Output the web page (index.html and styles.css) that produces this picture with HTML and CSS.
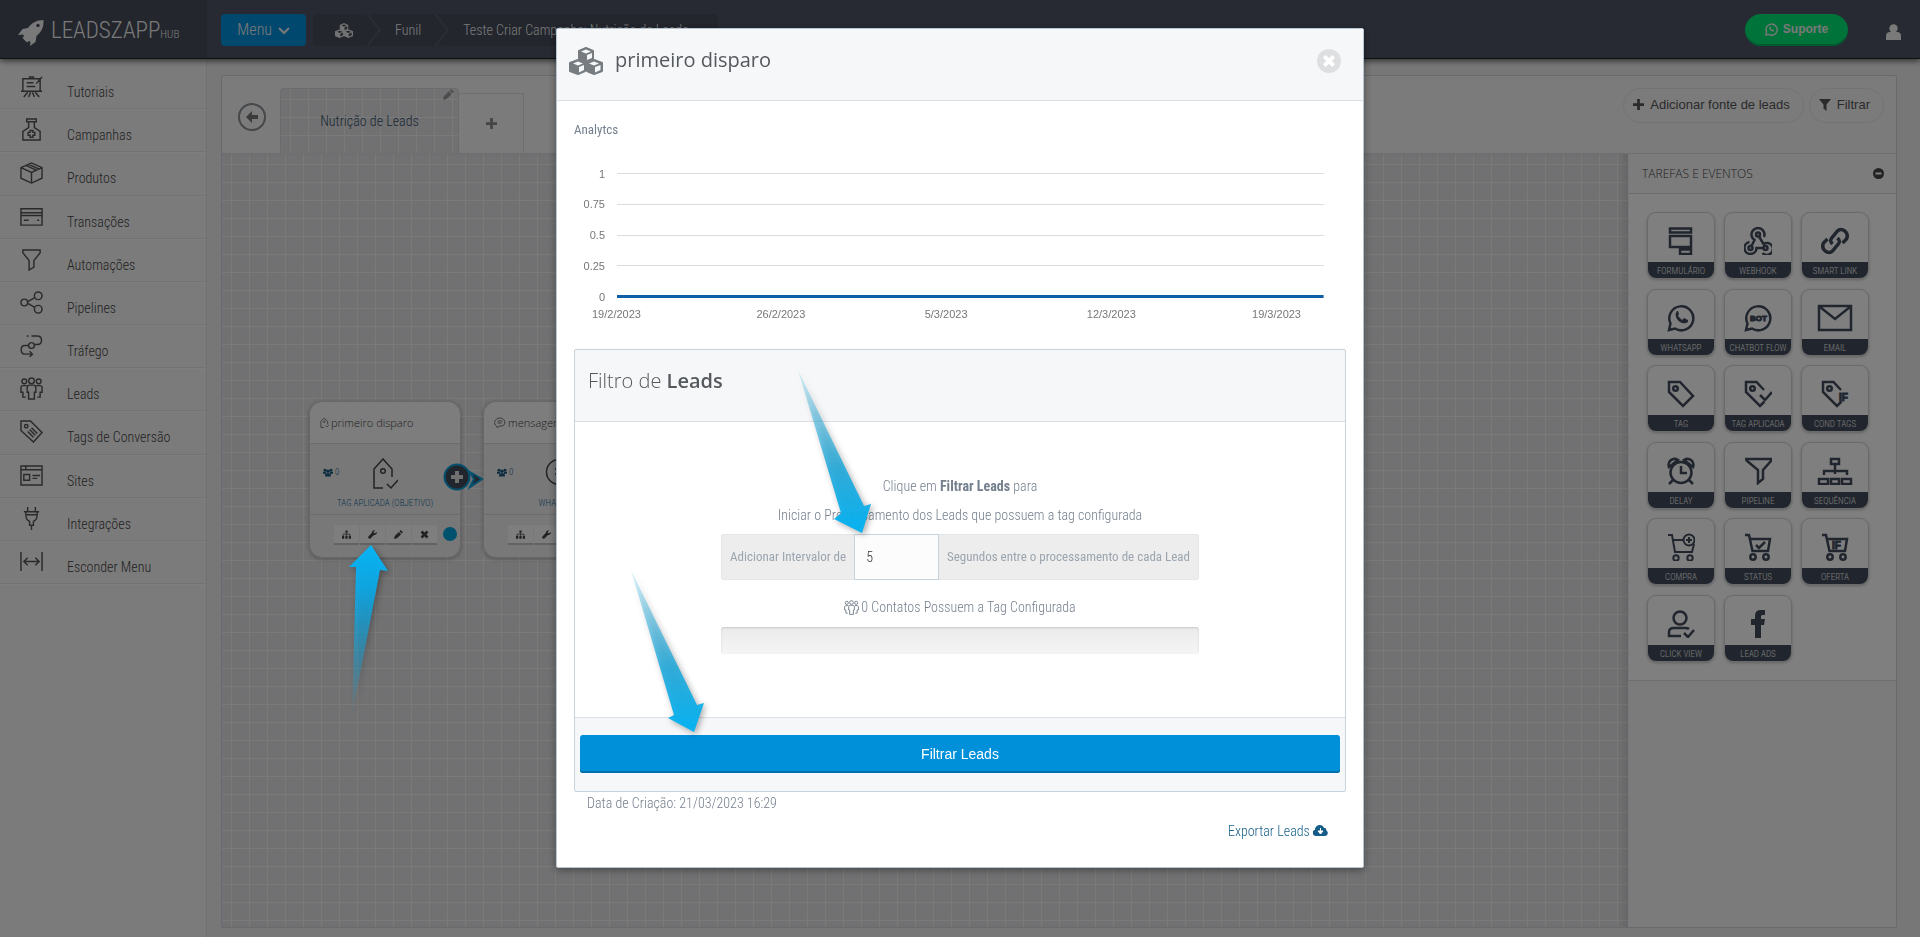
FILE: index.html
```html
<!DOCTYPE html>
<html lang="pt-BR">
<head>
<meta charset="utf-8">
<title>LeadsZapp Hub - Funil</title>
<link rel="stylesheet" href="styles.css">
</head>
<body>
<svg class="sprite" aria-hidden="true">
  <symbol id="cubes" viewBox="0 0 34 28"><g fill="currentColor" stroke="currentColor" stroke-width="2" stroke-linejoin="round"><path d="M17 1l7 3v8l-7 3-7-3V4z"/><path d="M9 13l7 3v8l-7 3-8-3v-8z"/><path d="M25 13l8 3v8l-8 3-7-3v-8z"/></g><g class="cube-face"><path d="M17 2.500l5 2-5 2-5-2z"/><path d="M18 8l5-2v5l-5 2z"/><path d="M9 14.500l5 2-5 2-5-2z"/><path d="M10 20l5-2v5l-5 2.500z"/><path d="M25 14.500l5 2-5 2-5-2z"/><path d="M26 20l5.500-2v5l-5.500 2.500z"/></g></symbol>
  <symbol id="plus" viewBox="0 0 12 12"><path d="M6 0v12M0 6h12" stroke="currentColor" stroke-width="3" fill="none"/></symbol>
  <symbol id="pencil" viewBox="0 0 12 12"><path d="M0 12l1-4 5.500-5.500 3 3L4 11zM7.300 1.700L9 0l3 3-1.700 1.700z" fill="currentColor"/></symbol>
  <symbol id="sitemap" viewBox="0 0 12 11"><path d="M4.500 0h3v3h-3zM0 7h3v4H0zM4.500 7h3v4h-3zM9 7h3v4H9z" fill="currentColor"/><path d="M6 3v4M1.500 7V5h9v2" stroke="currentColor" fill="none"/></symbol>
  <symbol id="wrench" viewBox="0 0 12 12"><path d="M11.500 2.500L9.600 4.300 7.900 4 7.600 2.400 9.500.5C7.500-.3 5 1 5.200 3.800L.6 8.700C-.8 10.300 1.500 12.900 3.300 11.300L8 6.700C10.800 7 12.500 4.500 11.500 2.500z" fill="currentColor"/></symbol>
  <symbol id="times" viewBox="0 0 12 12"><path d="M2 2l8 8M10 2l-8 8" stroke="currentColor" stroke-width="3.500" fill="none"/></symbol>
  <symbol id="users" viewBox="0 0 15 12"><g fill="currentColor"><circle cx="3" cy="2.500" r="2.200"/><circle cx="12" cy="2.500" r="2.200"/><circle cx="7.500" cy="4.200" r="2.600"/><path d="M0 8V5h4.500v3zM10.500 8V5H15v3zM3 12c0-4 1-5 2.500-5h4C11 7 12 8 12 12z"/></g></symbol>
  <symbol id="funnel" viewBox="0 0 24 24"><path d="M3 2h18v3l-6.500 8v7L9.500 23V13L3 5z" stroke-linejoin="miter"/></symbol>
  <symbol id="people" viewBox="0 0 24 24"><circle cx="12" cy="4" r="3"/><circle cx="4.500" cy="4.500" r="2.500"/><circle cx="19.500" cy="4.500" r="2.500"/><path d="M9 23v-7H7.500v-5C7.500 9 8.500 8.500 10 8.500h4c1.500 0 2.500.5 2.500 2.500v5H15v7zM7 9H3C1.500 9 1 10 1 11v5h2v5h3M17 9h4c1.500 0 2 1 2 2v5h-2v5h-3"/></symbol>
  <symbol id="tag" viewBox="0 0 28 28"><path d="M2 2h11l13 14-10 10L2 12z"/><circle cx="8.500" cy="8.500" r="2.300"/></symbol>
  <symbol id="tagcut" viewBox="0 0 28 28"><path d="M20 10l-7.500-8H2v10l14 14 4.500-4.500"/><circle cx="8.500" cy="8.500" r="2.300"/></symbol>
  <symbol id="cart" viewBox="0 0 28 28"><path d="M1 2h4l3.500 16h15.500L26 6H6"/><circle cx="9" cy="24" r="2.700"/><circle cx="22" cy="24" r="2.700"/></symbol>
  <symbol id="bubble" viewBox="0 0 28 28"><path d="M2 26l1.500-6.500A12 12 0 1 1 8 24.500z"/></symbol>
</svg>

<div class="app">
  <header class="topbar">
    <a class="brand" href="#"><svg width="26" height="26" viewBox="0 0 26 26"><path d="M25.500 0c-7 0-12 3-15.500 8L4.500 9 0 15l5-.5 1 1.500-1.500 2 4.500 4.500 2-1.500 1.500 1-.5 4 5.500-4 1-6C23 12 26 8 25.500 0z" fill="currentColor"/><circle cx="20" cy="5.500" r="1.700" fill="#464c5b"/></svg><span class="brand-name">LEADSZAPP<small>HUB</small></span></a>
    <div class="toolbar">
      <button class="menu-btn" type="button">Menu <svg width="12" height="8" viewBox="0 0 12 8"><path d="M1 1l5 5 5-5" fill="none" stroke="currentColor" stroke-width="2"/></svg></button>
      <nav class="crumbs" aria-label="Trilha"><a class="crumb-home" href="#" aria-label="Início"><svg width="18" height="15"><use href="#cubes"/></svg></a><svg class="crumb-sep" viewBox="0 0 14 32"><path d="M0 0l13 16L0 32"/></svg><a class="crumb" href="#">Funil</a><svg class="crumb-sep" viewBox="0 0 14 32"><path d="M0 0l13 16L0 32"/></svg><a class="crumb" href="#">Teste Criar Campanha: Nutrição de Leads</a></nav>
      <button class="support" type="button"><svg width="13" height="13" viewBox="0 0 28 28" fill="none" stroke="currentColor" stroke-width="3"><use href="#bubble"/><path d="M10 8c-3 5 4 12 9 10l1-2-3-2-2 1-3-3 1-2-1-3z" fill="currentColor" stroke="none"/></svg>Suporte</button>
      <button class="profile" type="button" aria-label="Perfil"><svg width="15" height="16" viewBox="0 0 15 16"><path d="M0 16v-4c0-2 1-4 4-4h7c3 0 4 2 4 4v4z" fill="currentColor"/><circle cx="7.500" cy="4.500" r="4.200" fill="currentColor"/></svg></button>
    </div>
  </header>

  <aside class="sidebar">
    <ul class="side-list">
      <li><a href="#"><svg viewBox="0 0 24 24"><path d="M3 4h18v13H3zM1 17h22M8 18l-4 5M16 18l4 5M11 18l-2 5M13 18l2 5M10 4V2h4v2M7 8h7M7 12h9M23 2l-6 7"/></svg><span>Tutoriais</span></a></li>
      <li><a href="#"><svg viewBox="0 0 24 24"><path d="M7 1h10v3H7zM9 4v6l-6 4v9h18v-9l-6-4V4"/><path d="M10.500 13h3v2h2v3h-2v2h-3v-2h-2v-3h2z"/></svg><span>Campanhas</span></a></li>
      <li><a href="#"><svg viewBox="0 0 24 24"><path d="M1 7l11-5 11 5v11l-11 5L1 18zM1 7l11 5 11-5M12 12v11M6 4.500l11 5M9 3.500l11 5"/></svg><span>Produtos</span></a></li>
      <li><a href="#"><svg viewBox="0 0 24 24"><path d="M1 4h22v17H1zM1 8h22M1 11h22M4 16h5M18 16h2"/></svg><span>Transações</span></a></li>
      <li><a href="#"><svg><use href="#funnel"/></svg><span>Automações</span></a></li>
      <li><a href="#"><svg viewBox="0 0 24 24"><circle cx="4.500" cy="12" r="3.500"/><circle cx="19" cy="5" r="4"/><circle cx="19" cy="19" r="4"/><path d="M8 11l7.500-4M8 13l7.500 4"/></svg><span>Pipelines</span></a></li>
      <li><a href="#"><svg viewBox="0 0 24 24"><circle cx="12" cy="12" r="3"/><path d="M7 2h2M12 2h6c6 0 6 9 0 9h-3M9 12H5c-5 0-5 9 0 9h7M10 18l3 3-3 3"/></svg><span>Tráfego</span></a></li>
      <li><a href="#"><svg><use href="#people"/></svg><span>Leads</span></a></li>
      <li><a href="#"><svg viewBox="0 0 24 24"><path d="M1 1h10l12 12-9 10L1 11z"/><circle cx="6.500" cy="6.500" r="1.800"/><path d="M8 12l6 6M10 10l6 6M12 8l6 6"/></svg><span>Tags de Conversão</span></a></li>
      <li><a href="#"><svg viewBox="0 0 24 24"><path d="M1 2h22v20H1zM1 6h22M6 2v4M4 11h6v6H4zM13 12h8M13 15h5"/></svg><span>Sites</span></a></li>
      <li><a href="#"><svg viewBox="0 0 24 24"><path d="M4 5h16M8 0v5M16 0v5M6 5c0 7 1 9 4 10v4h4v-4c3-1 4-3 4-10M12 19v5M6 8h12"/></svg><span>Integrações</span></a></li>
      <li><a href="#"><svg viewBox="0 0 24 24"><path d="M1 2v20M23 2v20M4 12h16M8 8l-4 4 4 4M16 8l4 4-4 4"/></svg><span>Esconder Menu</span></a></li>
    </ul>
  </aside>

  <main class="content">
    <section class="board">
      <div class="board-head">
        <button class="back" type="button" aria-label="Voltar"><svg width="12" height="12" viewBox="0 0 12 12"><path d="M0 6l6-6v4h6v4H6v4z" fill="currentColor"/></svg></button>
        <button class="tab" type="button">Nutrição de Leads<svg class="tab-edit" width="11" height="11"><use href="#pencil"/></svg></button>
        <button class="tab-add" type="button" aria-label="Nova aba"><svg width="11" height="11"><use href="#plus"/></svg></button>
        <div class="board-actions">
          <button class="pill" type="button"><svg width="11" height="11"><use href="#plus"/></svg>Adicionar fonte de leads</button>
          <button class="pill" type="button"><svg width="12" height="12" viewBox="0 0 12 12"><path d="M0 0h12L7.500 5.500V12L4.500 9.500v-4z" fill="currentColor"/></svg>Filtrar</button>
        </div>
      </div>
      <div class="board-body">
        <div class="canvas">
          <article class="node node-a">
            <h3><svg width="9" height="11" viewBox="0 0 20 24"><path d="M2 23V9l7-7 8 7v7M2 23h7M12 19l3 3 5-5"/><circle cx="9.500" cy="10" r="2"/></svg>primeiro disparo</h3>
            <div class="node-body">
              <span class="count"><svg width="10" height="9"><use href="#users"/></svg>0</span>
              <svg class="node-icon" width="25" height="32" viewBox="0 0 25 32"><path d="M10 30H1V11L10 1l9 10v8M14 26l4 4 7-8"/><circle cx="10" cy="13" r="2.300"/></svg>
              <p>TAG APLICADA (OBJETIVO)</p>
            </div>
            <div class="node-foot"><div class="node-tools"><button type="button" aria-label="Fluxo"><svg><use href="#sitemap"/></svg></button><button type="button" aria-label="Ações"><svg><use href="#wrench"/></svg></button><button type="button" aria-label="Editar"><svg><use href="#pencil"/></svg></button><button type="button" aria-label="Excluir"><svg><use href="#times"/></svg></button></div><i class="dot"></i></div>
          </article>
          <article class="node node-b">
            <h3><svg width="12" height="11" viewBox="0 0 24 22"><path d="M5 18C-2 14 1 2 12 2s13 14 4 16h-4l-6 3zM7 8h10M7 12h8"/></svg>mensagem</h3>
            <div class="node-body">
              <span class="count"><svg width="10" height="9"><use href="#users"/></svg>0</span>
              <svg class="node-icon" width="28" height="32" viewBox="0 0 28 32"><circle cx="14" cy="14" r="12.500"/><path d="M10 11h9M10 16h7"/></svg>
              <p>WHATSAPP</p>
            </div>
            <div class="node-foot"><div class="node-tools"><button type="button" aria-label="Fluxo"><svg><use href="#sitemap"/></svg></button><button type="button" aria-label="Ações"><svg><use href="#wrench"/></svg></button><button type="button" aria-label="Editar"><svg><use href="#pencil"/></svg></button><button type="button" aria-label="Excluir"><svg><use href="#times"/></svg></button></div></div>
          </article>
          <svg class="link" width="42" height="30" viewBox="0 0 42 30"><path d="M27 9l12 7-12 8 4-8z" fill="#434c5c" stroke="#0aa0da" stroke-width="2"/><circle cx="14" cy="14" r="12.500" fill="#434c5c" stroke="#0aa0da" stroke-width="2"/><path d="M14 8v12M8 14h12" stroke="#e0e0e0" stroke-width="4"/></svg>
        </div>
        <aside class="tasks">
          <div class="tasks-head"><h2>TAREFAS E EVENTOS</h2><button type="button" aria-label="Recolher"><svg width="11" height="11" viewBox="0 0 11 11"><circle cx="5.500" cy="5.500" r="5.500" fill="#464646"/><path d="M2.500 5.500h6" stroke="#fff" stroke-width="2"/></svg></button></div>
          <div class="tiles">
            <button class="tile" type="button"><svg viewBox="0 0 28 28"><path d="M3 1.500h21v4H3zM3 9h21v11H3zM13 22.500h11V27H13z"/></svg><span>FORMULÁRIO</span></button>
            <button class="tile" type="button"><svg viewBox="0 0 28 28"><circle cx="14" cy="7.500" r="2"/><circle cx="6.500" cy="21" r="2"/><circle cx="21.500" cy="21" r="2"/><path d="M20 10a6.500 6.500 0 1 0-9.500 3l-3 6M15 9.500l4.500 7.500a6 6 0 1 1-1 9M5.500 15a6 6 0 1 0 7 6h7"/></svg><span>WEBHOOK</span></button>
            <button class="tile" type="button"><svg class="heavy" viewBox="0 0 28 28"><path d="M11.500 17c-3-3-2-5 0-7l5-6c4-4 12 1 9 8l-4 4M16.500 11c3 3 2 5 0 7l-5 6c-4 4-12-1-9-8l4-4"/></svg><span>SMART LINK</span></button>
            <button class="tile" type="button"><svg viewBox="0 0 28 28"><use href="#bubble"/><path d="M10 7c-5 6 5 16 11 11v-2l-4-2-2 2-4-4 1-2-1-3z" fill="currentColor" stroke="none"/></svg><span>WHATSAPP</span></button>
            <button class="tile" type="button"><svg viewBox="0 0 28 28"><use href="#bubble"/><text x="6" y="17" font-size="8">BOT</text></svg><span>CHATBOT FLOW</span></button>
            <button class="tile" type="button"><svg class="wide" viewBox="0 0 36 28"><path d="M2 2h32v24H2zM3 3l15 12L33 3"/></svg><span>EMAIL</span></button>
            <button class="tile" type="button"><svg><use href="#tag"/></svg><span>TAG</span></button>
            <button class="tile" type="button"><svg viewBox="0 0 28 28"><use href="#tagcut"/><path d="M16 15l5 5 7-8"/></svg><span>TAG APLICADA</span></button>
            <button class="tile" type="button"><svg viewBox="0 0 28 28"><use href="#tagcut"/><text x="18" y="21" font-size="10">IF</text></svg><span>COND TAGS</span></button>
            <button class="tile" type="button"><svg viewBox="0 0 28 28"><circle cx="14" cy="15.500" r="10.500"/><path d="M14 9v7h6M6 23l-4 4M22 23l4 4M2 10C0 4 6 0 11 3zM26 10c2-6-4-10-9-7z"/></svg><span>DELAY</span></button>
            <button class="tile" type="button"><svg viewBox="0 0 28 28"><path d="M1 2h26v2l-8 9v9l-5 4V13L2 3"/></svg><span>PIPELINE</span></button>
            <button class="tile" type="button"><svg class="wide" viewBox="0 0 36 28"><path d="M14 2h8v5h-8zM2 22h9v5H2zM14 22h8v5h-8zM25 22h9v5h-9zM18 7v10M7 18v-4h23v4"/></svg><span>SEQUÊNCIA</span></button>
            <button class="tile" type="button"><svg class="thin" viewBox="0 0 28 28"><path d="M1 2h4l3 17h17l2-8M6 7h11"/><circle cx="9" cy="25" r="2.700"/><circle cx="23" cy="25" r="2.700"/><circle cx="22" cy="7" r="5.500"/><path d="M22 4v6M19 7h6"/></svg><span>COMPRA</span></button>
            <button class="tile" type="button"><svg viewBox="0 0 28 28"><use href="#cart"/><path d="M12 12l3 3 6-6"/></svg><span>STATUS</span></button>
            <button class="tile" type="button"><svg viewBox="0 0 28 28"><use href="#cart"/><text x="11" y="16" font-size="10">IF</text></svg><span>OFERTA</span></button>
            <button class="tile" type="button"><svg viewBox="0 0 28 28"><circle cx="13" cy="8" r="6.500"/><path d="M14 26H2v-4c0-3 2-4 5-4h11c2 0 3 0 4 1M17 23l4 4 6-7"/></svg><span>CLICK VIEW</span></button>
            <button class="tile" type="button"><svg viewBox="0 0 28 28"><path d="M11 28V15H7V9h4V6c0-4 2-6 6-6h4v5h-2c-2 0-2 1-2 2v2h4l-1 6h-3v13z" fill="currentColor" stroke="none"/></svg><span>LEAD ADS</span></button>
          </div>
        </aside>
      </div>
    </section>
  </main>
</div>

<div class="backdrop">
  <div class="modal" role="dialog" aria-modal="true" aria-labelledby="modal-title">
    <header class="modal-head">
      <svg width="34" height="28"><use href="#cubes"/></svg>
      <h1 id="modal-title">primeiro disparo</h1>
      <button class="close" type="button" aria-label="Fechar"><svg width="14" height="14"><use href="#times"/></svg></button>
    </header>
    <div class="modal-body">
      <h2 class="caption">Analytcs</h2>
      <svg class="chart" role="img" aria-label="Analytcs">
        <g class="grid"><line x1="43" x2="97.100%" y1="20.500" y2="20.500"/><line x1="43" x2="97.100%" y1="51.500" y2="51.500"/><line x1="43" x2="97.100%" y1="82.500" y2="82.500"/><line x1="43" x2="97.100%" y1="112.500" y2="112.500"/></g>
        <line class="series" x1="43" x2="97.100%" y1="143.500" y2="143.500"/>
        <g class="y-axis"><text x="31" y="25">1</text><text x="31" y="55">0.75</text><text x="31" y="86">0.5</text><text x="31" y="117">0.25</text><text x="31" y="148">0</text></g>
        <g class="x-axis"><text x="5.500%" y="165">19/2/2023</text><text x="26.800%" y="165">26/2/2023</text><text x="48.200%" y="165">5/3/2023</text><text x="69.600%" y="165">12/3/2023</text><text x="91%" y="165">19/3/2023</text></g>
      </svg>
      <section class="filter">
        <h2>Filtro de <b>Leads</b></h2>
        <div class="filter-body">
          <p>Clique em <b>Filtrar Leads</b> para</p>
          <p>Iniciar o Processamento dos Leads que possuem a tag configurada</p>
          <div class="group"><label for="interval">Adicionar Intervalor de</label><input id="interval" type="text" value="5"><span>Segundos entre o processamento de cada Lead</span></div>
          <p class="contacts"><svg width="15" height="15"><use href="#people"/></svg>0 Contatos Possuem a Tag Configurada</p>
          <div class="progress" role="progressbar" aria-valuenow="0"></div>
        </div>
        <footer><button class="primary" type="button">Filtrar Leads</button></footer>
      </section>
      <p class="created">Data de Criação: 21/03/2023 16:29</p>
      <a class="export" href="#">Exportar Leads <svg width="15" height="11" viewBox="0 0 15 11"><path d="M4 11C-2 11-1 5 2 5c0-5 7-7 9-2 3 0 2 2 2 2 3 2 2 6-1 6z" fill="currentColor"/><path d="M7.500 3v3.500M5 6l2.500 3L10 6z" stroke="#fff" fill="#fff"/></svg></a>
    </div>
  </div>
</div>

<svg class="pointer pointer-a" width="60" height="190" viewBox="340 535 60 190"><defs><linearGradient id="ga" x1="0" y1="1" x2="0" y2="0"><stop offset="0" stop-color="#08aeef" stop-opacity="0"/><stop offset=".75" stop-color="#08aeef" stop-opacity=".9"/><stop offset="1" stop-color="#08b4f4"/></linearGradient></defs><path d="M371 545l-22 22h7l-4 149 28-146 8 1z" fill="url(#ga)"/></svg>
<svg class="pointer pointer-b" width="100" height="180" viewBox="786 360 100 180"><defs><linearGradient id="gb" x1="0" y1="0" x2="0" y2="1"><stop offset="0" stop-color="#2aaedd" stop-opacity=".15"/><stop offset=".6" stop-color="#1aa8dc" stop-opacity=".85"/><stop offset="1" stop-color="#06b2f2"/></linearGradient></defs><path d="M862 533l-28-14 7-6-43-143 66 136 7-2z" fill="url(#gb)"/></svg>
<svg class="pointer pointer-c" width="100" height="180" viewBox="619 559 100 180"><path d="M694 732l-26-14 6-3-43-145 66 135 7-2z" fill="url(#gb)"/></svg>
</body>
</html>
```
FILE: styles.css
```css
:root {
  --cond: "Roboto Condensed", "Liberation Sans Narrow", Roboto, sans-serif;
  --open: "Open Sans", sans-serif;
  --arial: "Liberation Sans", sans-serif;
  --navy: #434c5c;
  --line: #dcdfe3;
  --blue-line: #c5d3df;
}
* { box-sizing: border-box; }
body { margin: 0; background: #efefef; color: #666; font: 300 14px/20px var(--cond); overflow: hidden; }
h1, h2, h3, p, ul { margin: 0; padding: 0; font-weight: 300; }
button { padding: 0; border: 0; background: none; color: inherit; font: inherit; }
a { color: inherit; text-decoration: none; }
.sprite { position: absolute; width: 0; height: 0; }

.app { display: grid; grid-template-columns: 207px 1fr; grid-template-rows: 59px 1fr; min-height: 100vh; }

.topbar { grid-column: 1 / -1; display: flex; z-index: 1; background: #4e5565; color: #f2f2f2; border-bottom: 1px solid #222; box-shadow: 0 2px 6px rgba(0, 0, 0, .6); }
.brand { display: flex; align-items: center; gap: 7px; width: 207px; padding: 8px 0 0 18px; background: #464c5b; }
.brand-name { font-size: 23px; line-height: 24px; }
.brand-name small { font-size: 11px; }
.toolbar { flex: 1; display: flex; align-items: flex-start; padding: 14px 19px 0 14px; }
.menu-btn { width: 85px; height: 32px; border-radius: 4px; background: #0090da; font-size: 16px; }
.menu-btn svg { margin-left: 2px; }
.crumbs { display: flex; align-items: center; height: 32px; margin-left: 7px; padding: 0 30px 0 22px; border-radius: 4px; background: #464c5b; }
.crumb-home { display: flex; color: #e6e6e6; --face: #464c5b; }
.cube-face { fill: var(--face, #fff); }
.crumb-sep { width: 14px; height: 32px; margin: 0 14px; fill: none; stroke: #545b6b; stroke-width: 2; }
.support { display: flex; align-items: center; justify-content: center; gap: 5px; width: 103px; height: 32px; margin-left: auto; padding-bottom: 2px; border-radius: 16px; background: #00e676; box-shadow: inset 0 -2px 0 #00b85e; font: bold 12px/20px var(--arial); }
.profile { margin: 10px 0 0 38px; }

.sidebar { background: #f6f6f6; border-right: 1px solid #e2e2e2; }
.side-list { display: grid; grid-auto-rows: 1fr; min-height: 525px; padding-top: 7px; list-style: none; }
.side-list li { border-bottom: 1px solid #e6e6e6; box-shadow: 0 1px 0 #fcfcfc; }
.side-list a { display: flex; gap: 24px; padding-left: 20px; }
.side-list svg { width: 23px; height: 23px; margin-top: 9px; fill: none; stroke: #555; stroke-width: 1.500; }
.side-list span { margin-top: 16px; color: #444; }

.content { padding: 16px 23px 9px 14px; }
.board { display: flex; flex-direction: column; height: 100%; border: 1px solid #cfd6dc; border-radius: 2px; background: #f7f7f7; }
.board-head { display: flex; height: 78px; border-bottom: 1px solid #dcdcdc; }
.back { display: grid; place-items: center; width: 28px; height: 28px; margin: 27px 14px 0 16px; border: 2px solid #8a8f94; border-radius: 50%; color: #777; }
.tab, .canvas { background: repeating-linear-gradient(0deg, #eef0f300 0 17px, #f4f4f6 17px 18px) 0 10px / 18px 18px, repeating-linear-gradient(90deg, #eef0f300 0 17px, #f4f4f6 17px 18px) 10px 0 / 18px 18px, linear-gradient(#e3e3f0 1px, transparent 1px) 0 0 / 18px 18px, linear-gradient(90deg, #e3e3f0 1px, transparent 1px) 0 0 / 18px 18px, #e3e3e3; }
.tab { position: relative; width: 179px; margin-top: 12px; border: 1px solid #d6d6d6; border-bottom: 0; border-radius: 4px 4px 0 0; color: #34506a; }
.tab-edit { position: absolute; top: 0; right: 4px; color: #999; }
.tab-add { width: 65px; margin-top: 17px; border: 1px solid #dcdcdc; border-left: 0; border-bottom: 0; color: #8a8a8a; }
.board-actions { display: flex; gap: 5px; margin: 12px 12px 0 auto; }
.pill { display: flex; align-items: center; gap: 6px; height: 35px; padding: 0 13px 2px 9px; border: 1px solid #e6e6e6; border-radius: 18px; color: #555; font: 13px/20px var(--arial); }
.board-body { flex: 1; display: flex; }
.canvas { position: relative; flex: 1; box-shadow: inset -8px 0 8px -4px rgba(0, 0, 0, .12); }
.node { position: absolute; top: 247px; width: 152px; border: 1px solid #cfcfcf; border-radius: 13px; background: #f1f1f1; box-shadow: 0 1px 4px rgba(0, 0, 0, .25); }
.node-a { left: 87px; }
.node-b { left: 261px; }
.node h3 { display: flex; align-items: center; gap: 2px; height: 42px; padding-left: 10px; border-bottom: 1px solid #d8d8d8; border-radius: 13px 13px 0 0; background: #fafafa; color: #444; font: 300 11px/20px var(--open); }
.node h3 svg { fill: none; stroke: #777; stroke-width: 2; }
.node-body { position: relative; height: 71px; padding-top: 14px; border-bottom: 1px solid #d8d8d8; text-align: center; color: #1c6c9c; font-size: 9px; }
.node-body p { margin-top: 3px; }
.node-icon { display: block; margin: 0 auto; fill: none; stroke: #444; stroke-width: 1.500; }
.count { position: absolute; left: 13px; top: 18px; display: flex; align-items: center; gap: 2px; color: #1c5c80; }
.node-foot { display: flex; height: 42px; padding: 10px 5px 0 24px; }
.node-tools { display: flex; gap: 1px; }
.node-tools button { width: 25px; height: 20px; background: #fcfcfc; border-bottom: 2px solid #c4c4c4; color: #444; line-height: 0; }
.node-tools svg { width: 9px; height: 9px; }
.dot { flex: none; width: 14px; height: 14px; margin: 2px 0 0 6px; border-radius: 50%; background: #00a4dc; }
.link { position: absolute; left: 221px; top: 309px; }

.tasks { width: 268px; border-left: 1px solid #f2f2f2; }
.tasks-head { display: flex; align-items: center; justify-content: space-between; height: 40px; padding: 0 12px 0 13px; border-bottom: 1px solid #dcdcdc; background: #f8f8f8; }
.tasks-head h2 { color: #444; font: 300 12px/20px var(--open); }
.tasks-head button { line-height: 0; }
.tiles { display: grid; grid-template-columns: repeat(3, 68px); grid-auto-rows: 67px; column-gap: 9px; align-content: space-between; min-height: 487px; padding: 18px; border-bottom: 1px solid #dcdcdc; background: #fff; }
.tile { display: flex; flex-direction: column; align-items: center; justify-content: space-between; overflow: hidden; border: 1px solid #d6d6d6; border-radius: 9px; background: #fff; box-shadow: 0 1px 3px rgba(0, 0, 0, .25); color: var(--navy); }
.tile svg { width: 28px; height: 28px; margin-top: 14px; fill: none; stroke: currentColor; stroke-width: 2.500; }
.tile svg.wide { width: 36px; }
.tile svg.heavy { stroke-width: 3.500; }
.tile svg.thin { stroke-width: 2; }
.tile text { fill: currentColor; stroke: currentColor; stroke-width: 1; font-family: var(--arial); font-weight: bold; }
.tile span { width: 100%; height: 16px; background: var(--navy); color: #f2f2f2; font-size: 9px; line-height: 18px; white-space: nowrap; }

.backdrop { position: fixed; inset: 0; z-index: 2; background: rgba(0, 0, 0, .5); overflow: hidden; }
.modal { width: 808px; margin: 28px auto; border: 1px solid #b9c6d1; border-radius: 2px; background: #fff; color: #747f8d; box-shadow: 0 2px 8px rgba(0, 0, 0, .4); }
.modal-head { display: flex; align-items: flex-start; height: 72px; padding: 18px 22px 0 12px; border-bottom: 1px solid var(--line); background: #f5f7f9; color: #777c81; --face: #f5f7f9; }
.modal-head h1 { margin-left: 12px; color: #55585c; font: 500 20px/26px var(--open); }
.close { display: grid; place-items: center; width: 24px; height: 24px; margin: 2px 0 0 auto; border-radius: 50%; background: #dedfe0; color: #fff; }
.modal-body { padding: 19px 17px 26px; }
.caption { font-size: 13px; font-weight: 400; }
.chart { display: block; width: 100%; height: 196px; margin-top: 13px; font: 11px var(--arial); fill: #777; }
.grid { stroke: #dcdcdc; }
.series { stroke: #0f5fa6; stroke-width: 3; }
.y-axis { text-anchor: end; }
.x-axis { text-anchor: middle; }

.filter { border: 1px solid var(--blue-line); border-radius: 2px; background: #f5f7f9; }
.filter h2 { height: 72px; padding: 18px 13px; border-bottom: 1px solid var(--line); color: #55585c; font: 300 20px/26px var(--open); }
.filter h2 b { font-weight: 600; }
.filter-body { display: flex; flex-direction: column; align-items: center; padding: 50px 0 63px; background: #fff; border-bottom: 1px solid var(--line); }
.filter-body p { line-height: 29px; }
.filter-body b { font-weight: 700; }
.group { display: flex; width: 478px; height: 46px; margin-top: 4px; border: 1px solid #e4e6e8; border-radius: 2px; background: #ededed; color: #9ba5af; font-size: 13px; font-weight: 400; line-height: 44px; white-space: nowrap; }
.group label { padding: 0 8px; }
.group span { padding: 0 8px; }
.group input { flex: 1; width: 0; min-width: 0; margin: -1px 0; padding: 0 11px; border: 1px solid var(--blue-line); background: #fcfcfc; color: #333; font: 300 14px/20px var(--cond); }
.contacts { display: flex; align-items: center; gap: 2px; margin-top: 13px; }
.contacts svg { fill: none; stroke: currentColor; stroke-width: 1.500; }
.progress { width: 478px; height: 27px; margin-top: 5px; border-radius: 3px; background: linear-gradient(#ebebeb, #f5f5f5); box-shadow: inset 0 1px 2px rgba(0, 0, 0, .15); }
.filter footer { padding: 17px 5px 18px; }
.primary { display: block; width: 100%; height: 38px; border-radius: 3px; background: #0090da; box-shadow: inset 0 -2px 0 #0070ad; color: #fff; font: 14px/20px var(--arial); }
.created { padding: 0 13px; line-height: 22px; }
.export { display: block; margin: 7px 18px 0; text-align: right; color: #155d88; }

.pointer { position: absolute; z-index: 3; filter: drop-shadow(2px 2px 3px rgba(0, 0, 0, .35)); }
.pointer-a { left: 340px; top: 535px; }
.pointer-b { left: 786px; top: 360px; }
.pointer-c { left: 619px; top: 559px; }
```
